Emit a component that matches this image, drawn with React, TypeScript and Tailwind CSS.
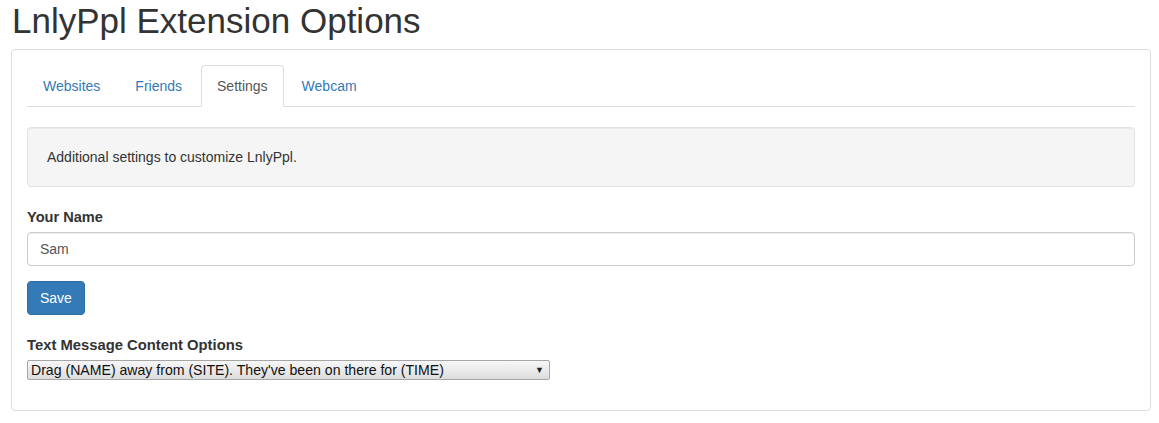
const tabs = ['Websites', 'Friends', 'Settings', 'Webcam']

export default function App() {
  const active = 'Settings'

  return (
    <div className="min-h-screen bg-white text-[#333] text-[14px] leading-[20px] font-['Liberation_Sans',Arial,sans-serif]">
      <h1 className="px-[12px] pt-[1px] text-[35px] leading-[40px] font-normal mb-[8px]">LnlyPpl Extension Options</h1>

      <div className="ml-[11px] mr-[8px] border border-[#ddd] rounded-[4px] p-[15px]">
        <ul className="flex border-b border-[#ddd]">
          {tabs.map((t) =>
            t === active ? (
              <li key={t} className="mr-[2px] -mb-px">
                <span className="block px-[15px] py-[10px] border border-[#ddd] border-b-transparent rounded-t-[4px] bg-white text-[#555]">
                  {t}
                </span>
              </li>
            ) : (
              <li key={t} className="mr-[3px] -mb-px">
                <a className="block px-[15px] py-[10px] border border-transparent text-[#337ab7]">{t}</a>
              </li>
            )
          )}
        </ul>

        <div className="mt-[20px] mb-[20px] p-[19px] bg-[#f5f5f5] border border-[#e3e3e3] rounded-[4px] shadow-[inset_0_1px_1px_rgba(0,0,0,0.05)]">
          Additional settings to customize LnlyPpl.
        </div>

        <div className="mb-[15px]">
          <label className="block font-bold text-[14.6px] mb-[5px]">Your Name</label>
          <div className="h-[34px] px-[12px] py-[6px] border border-[#ccc] rounded-[4px] shadow-[inset_0_1px_1px_rgba(0,0,0,0.075)] text-[#555]">
            Sam
          </div>
        </div>

        <button className="h-[34px] px-[12px] bg-[#337ab7] border border-[#2e6da4] rounded-[4px] text-white">Save</button>

        <div className="mt-[20px] mb-[15px]">
          <label className="block font-bold text-[14.8px] mb-[5px]">Text Message Content Options</label>
          <div className="w-[523px] h-[20px] flex items-center justify-between pl-[3px] pr-[5px] border border-[#a6a6a6] rounded-[2px] bg-gradient-to-b from-[#f7f7f7] to-[#dddddd] text-[#111] text-[14.1px] leading-[18px]">
            <span>Drag (NAME) away from (SITE). They've been on there for (TIME)</span>
            <span className="text-[9px] text-[#222]">▼</span>
          </div>
        </div>
      </div>
    </div>
  )
}
